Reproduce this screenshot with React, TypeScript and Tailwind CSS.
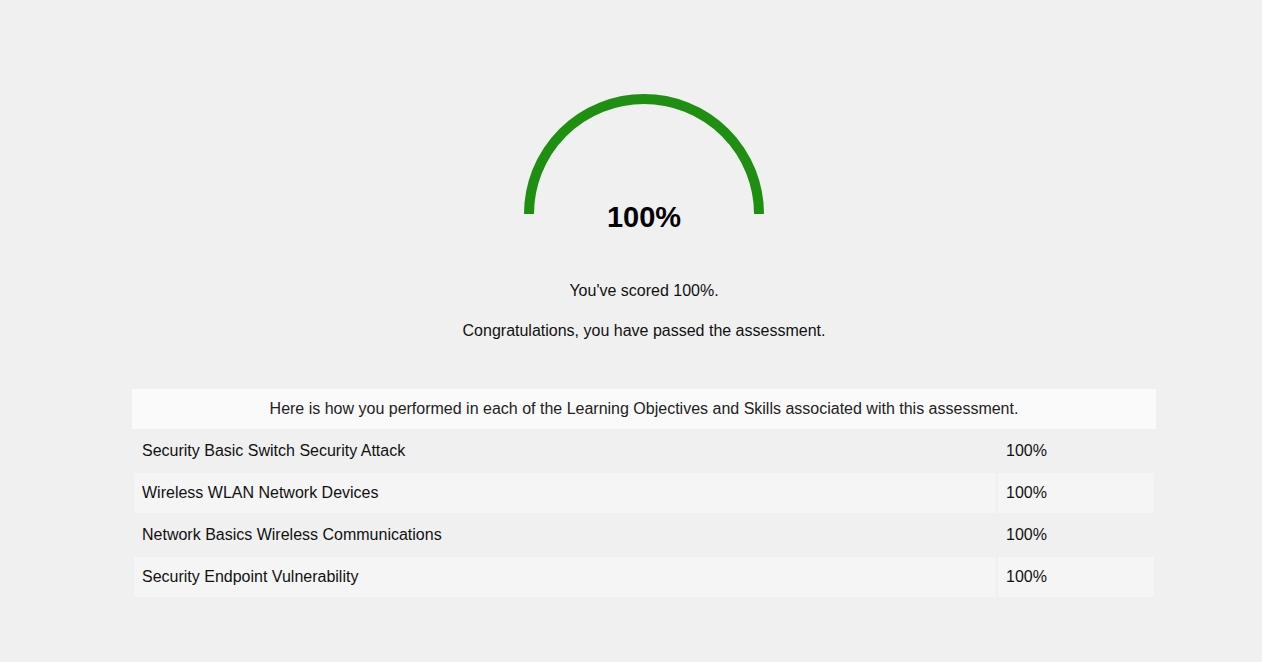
const objectives = [
  { name: "Security Basic Switch Security Attack", score: "100%" },
  { name: "Wireless WLAN Network Devices", score: "100%" },
  { name: "Network Basics Wireless Communications", score: "100%" },
  { name: "Security Endpoint Vulnerability", score: "100%" },
];

function Gauge({ percent }: { percent: number }) {
  return (
    <div className="relative flex h-[140px] justify-center">
      <svg width="250" height="120" viewBox="0 0 250 120">
        <path d="M10 120 A115 115 0 0 1 240 120" fill="none" stroke="#1e8f10" strokeWidth="10" />
      </svg>
      <div className="absolute left-0 right-0 top-[107px] text-center text-[29px] font-bold leading-8 text-black">
        {percent}%
      </div>
    </div>
  );
}

export default function App() {
  return (
    <div className="min-h-screen bg-[#f0f0f0] font-['Liberation_Sans',Arial,sans-serif] text-base text-[#111]">
      <div className="ml-[132px] w-[1024px] pt-[94px]">
        <Gauge percent={100} />
        <div className="mt-[45px] text-center leading-6">
          <p>You've scored 100%.</p>
          <p className="mt-4">Congratulations, you have passed the assessment.</p>
        </div>
        <div className="mt-[46px] flex h-10 items-center justify-center bg-[#fafafa] text-[#222]">
          Here is how you performed in each of the Learning Objectives and Skills associated with this assessment.
        </div>
        <table className="w-full border-separate border-spacing-[2px]">
          <tbody>
            {objectives.map((o, i) => (
              <tr key={o.name} className={i % 2 === 1 ? "bg-[#f5f5f5]" : ""}>
                <td className="h-10 px-2 py-0">{o.name}</td>
                <td className="h-10 w-[156px] px-2 py-0">{o.score}</td>
              </tr>
            ))}
          </tbody>
        </table>
      </div>
    </div>
  );
}
